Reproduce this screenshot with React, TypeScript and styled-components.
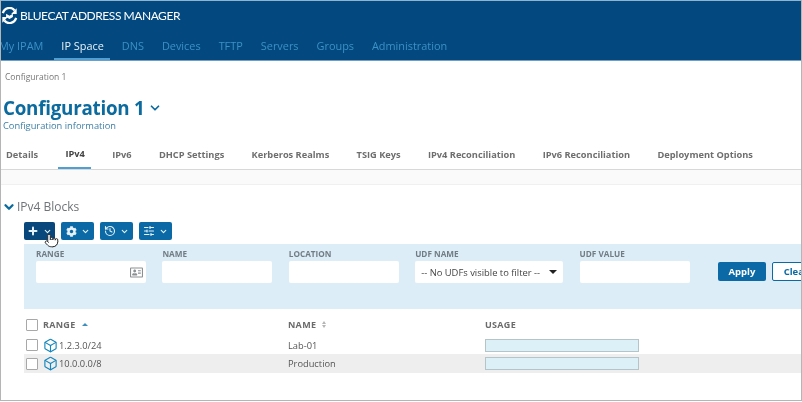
import React from "react"
import styled, { createGlobalStyle } from "styled-components"
import { Box, ChevronDown, History, Plus, Pointer, SlidersHorizontal } from "lucide-react"
import { FaCog, FaRegAddressCard } from "react-icons/fa"

const navItems = ["My IPAM", "IP Space", "DNS", "Devices", "TFTP", "Servers", "Groups", "Administration"]
const tabs = [
  "Details",
  "IPv4",
  "IPv6",
  "DHCP Settings",
  "Kerberos Realms",
  "TSIG Keys",
  "IPv4 Reconciliation",
  "IPv6 Reconciliation",
  "Deployment Options",
]
const rows = [
  { range: "1.2.3.0/24", name: "Lab-01" },
  { range: "10.0.0.0/8", name: "Production" },
]

function Logo() {
  return (
    <svg width="17" height="17" viewBox="0 0 18 18" fill="none">
      <path d="M2 6.5A7.2 7.2 0 0 1 14.5 3.6" stroke="#fff" strokeWidth="2.4" />
      <path d="M16 11.5A7.2 7.2 0 0 1 3.5 14.4" stroke="#fff" strokeWidth="2.4" />
      <path d="M16.6 1.2V7.4H10.8Z" fill="#fff" />
      <path d="M1.4 16.8V10.6H7.2Z" fill="#fff" />
      <path d="M5.4 7.2L9 9.2L12.6 7.2V10.6L9 12.6L5.4 10.6Z" fill="#fff" />
    </svg>
  )
}

function App() {
  return (
    <Page>
      <GlobalStyle />
      <Header>
        <Brand>
          <Logo />
          <BrandName>BLUECAT ADDRESS MANAGER</BrandName>
        </Brand>
        <Nav>
          {navItems.map((item) => (
            <NavItem key={item} $active={item === "IP Space"}>
              {item}
            </NavItem>
          ))}
        </Nav>
      </Header>

      <Breadcrumb>Configuration 1</Breadcrumb>
      <TitleRow>
        <Title>Configuration 1</Title>
        <ChevronDown size={14} strokeWidth={3} color="#0b6a9e" />
      </TitleRow>
      <Subtitle>Configuration information</Subtitle>

      <Tabs>
        {tabs.map((tab) => (
          <Tab key={tab} $active={tab === "IPv4"}>
            {tab}
          </Tab>
        ))}
      </Tabs>
      <TabShade />

      <Section>
        <SectionTitle>
          <SectionChevron>
            <ChevronDown size={14} strokeWidth={4} color="#0b6a9e" />
          </SectionChevron>
          IPv4 Blocks
        </SectionTitle>

        <Toolbar>
          <ToolButton $dark>
            <Plus size={12} strokeWidth={4} />
            <ChevronDown size={9} strokeWidth={3} />
            <Cursor>
              <Pointer size={15} strokeWidth={1.6} color="#2a2a2a" fill="#fff" />
            </Cursor>
          </ToolButton>
          <ToolButton>
            <FaCog size={11} />
            <ChevronDown size={9} strokeWidth={3} />
          </ToolButton>
          <ToolButton>
            <History size={12} strokeWidth={2.2} />
            <ChevronDown size={9} strokeWidth={3} />
          </ToolButton>
          <ToolButton>
            <SlidersHorizontal size={12} strokeWidth={2.2} />
            <ChevronDown size={9} strokeWidth={3} />
          </ToolButton>
        </Toolbar>

        <FilterPanel>
          <Field>
            <FieldLabel>RANGE</FieldLabel>
            <FieldInput>
              <FaRegAddressCard size={13} color="#8b8f92" />
            </FieldInput>
          </Field>
          <Field>
            <FieldLabel>NAME</FieldLabel>
            <FieldInput />
          </Field>
          <Field>
            <FieldLabel>LOCATION</FieldLabel>
            <FieldInput />
          </Field>
          <Field $wide>
            <FieldLabel>UDF NAME</FieldLabel>
            <FieldSelect>
              -- No UDFs visible to filter --
              <Caret />
            </FieldSelect>
          </Field>
          <Field>
            <FieldLabel>UDF VALUE</FieldLabel>
            <FieldInput />
          </Field>
          <Actions>
            <ApplyButton>Apply</ApplyButton>
            <ClearButton>Clear</ClearButton>
          </Actions>
        </FilterPanel>

        <Table>
          <HeadRow>
            <Checkbox />
            <RangeCell>
              RANGE <SortUp />
            </RangeCell>
            <NameCell>
              NAME <SortBoth />
            </NameCell>
            <div>USAGE</div>
          </HeadRow>
          {rows.map((row, index) => (
            <DataRow key={row.range} $shaded={index === 1}>
              <Checkbox />
              <RangeCell>
                <Box size={15} strokeWidth={1.8} color="#1486bc" />
                {row.range}
              </RangeCell>
              <NameCell>{row.name}</NameCell>
              <UsageBar />
            </DataRow>
          ))}
        </Table>
      </Section>
    </Page>
  )
}

export default App

const GlobalStyle = createGlobalStyle`
  html, body {
    margin: 0;
    padding: 0;
    background: #fff;
  }
`

const Page = styled.div`
  box-sizing: border-box;
  width: 802px;
  height: 401px;
  overflow: hidden;
  position: relative;
  background: #fff;
  border-left: 1px solid #b5b5b5;
  border-right: 1px solid #b5b5b5;
  border-bottom: 1px solid #b5b5b5;
  font-family: "Open Sans", sans-serif;
  color: #555;
  filter: blur(0.3px);
`

const Header = styled.header`
  background: #03497f;
  border-top: 1px solid #8fb4cf;
  border-bottom: 1px solid #6f9fc2;
`

const Brand = styled.div`
  height: 29px;
  display: flex;
  align-items: center;
  gap: 2px;
`

const BrandName = styled.div`
  color: #fff;
  font-family: "Lato", sans-serif;
  font-size: 12px;
  letter-spacing: -0.45px;
`

const Nav = styled.nav`
  height: 30px;
  display: flex;
  gap: 18px;
`

const NavItem = styled.div<{ $active?: boolean }>`
  font-size: 10.9px;
  line-height: 31px;
  height: 30px;
  color: ${(p) => (p.$active ? "#e8f2f8" : "#3b90c6")};
  position: relative;

  &:first-child {
    margin-left: -2px;
  }

  ${(p) =>
    p.$active &&
    `
    &::after {
      content: "";
      position: absolute;
      left: -7px;
      right: -6px;
      bottom: 0;
      height: 2px;
      background: #4f9fd4;
    }
  `}
`

const Breadcrumb = styled.div`
  font-size: 8.5px;
  line-height: 12px;
  color: #777;
  padding: 10px 0 0 4px;
`

const TitleRow = styled.div`
  display: flex;
  align-items: center;
  gap: 3px;
  padding: 14px 0 1px 2px;
`

const Title = styled.h1`
  margin: 0;
  font-size: 18.8px;
  letter-spacing: -0.25px;
  line-height: 22px;
  font-weight: 700;
  color: #0b6a9e;
`

const Subtitle = styled.div`
  font-size: 9.3px;
  line-height: 12px;
  color: #3d7fa6;
  padding-left: 2px;
`

const Tabs = styled.div`
  display: flex;
  gap: 27.3px;
  height: 33px;
  box-sizing: border-box;
  padding: 11px 0 0 5px;
  border-bottom: 1px solid #d8d8d8;
  margin-top: 5px;
`

const Tab = styled.div<{ $active?: boolean }>`
  font-size: 9.25px;
  font-weight: 700;
  line-height: 13px;
  color: ${(p) => (p.$active ? "#444" : "#6e6e6e")};
  position: relative;
  top: ${(p) => (p.$active ? "-1px" : "0")};

  ${(p) =>
    p.$active &&
    `
    &::after {
      content: "";
      position: absolute;
      left: -7px;
      right: -6px;
      top: 20px;
      height: 2px;
      background: #4f9fd4;
    }
  `}
`

const TabShade = styled.div`
  height: 14px;
  background: #fafafa;
  border-bottom: 1px solid #f0f0f0;
`

const Section = styled.section`
  padding: 14px 0 0 4px;
`

const SectionTitle = styled.div`
  display: flex;
  align-items: center;
  gap: 1px;
  font-size: 12px;
  line-height: 16px;
  color: #6f7478;
`

const SectionChevron = styled.span`
  display: flex;
  margin-left: -3px;
`

const Toolbar = styled.div`
  display: flex;
  gap: 6px;
  margin: 7px 0 0 19px;
`

const ToolButton = styled.div<{ $dark?: boolean }>`
  position: relative;
  display: flex;
  align-items: center;
  justify-content: center;
  gap: 4px;
  width: ${(p) => (p.$dark ? "31px" : "33px")};
  height: 18px;
  border-radius: 2px;
  color: #e6f1f8;
  background: ${(p) => (p.$dark ? "#07477b" : "#0b6aa6")};
`

const Cursor = styled.span`
  position: absolute;
  left: 20px;
  top: 11px;
  display: flex;
`

const FilterPanel = styled.div`
  display: flex;
  gap: 16.4px;
  height: 65px;
  box-sizing: border-box;
  margin: 4px -2px 0 19px;
  padding: 4px 0 0 12px;
  background: #dcedf8;
`

const Field = styled.div<{ $wide?: boolean }>`
  width: ${(p) => (p.$wide ? "148px" : "110px")};
  flex: none;
`

const FieldLabel = styled.div`
  font-size: 8.2px;
  font-weight: 700;
  line-height: 11px;
  color: #727c84;
`

const FieldInput = styled.div`
  height: 22px;
  margin-top: 2px;
  background: #fff;
  border-radius: 2px;
  display: flex;
  align-items: center;
  justify-content: flex-end;
  padding-right: 3px;
`

const FieldSelect = styled(FieldInput)`
  justify-content: space-between;
  padding: 0 6px;
  font-size: 9.4px;
  color: #444;
`

const Caret = styled.span`
  width: 0;
  height: 0;
  border-left: 4px solid transparent;
  border-right: 4px solid transparent;
  border-top: 4px solid #222;
`

const Actions = styled.div`
  display: flex;
  gap: 6px;
  margin: 14px 0 0 12px;
  flex: none;
`

const ApplyButton = styled.div`
  width: 48px;
  height: 19px;
  line-height: 19px;
  text-align: center;
  border-radius: 2px;
  background: #0b6aa6;
  color: #fff;
  font-size: 9.5px;
  font-weight: 700;
`

const ClearButton = styled(ApplyButton)`
  box-sizing: border-box;
  line-height: 17px;
  border: 1px solid #0b6aa6;
  background: #fff;
  color: #0b6aa6;
`

const Table = styled.div`
  margin: 4px 0 0 19px;
`

const HeadRow = styled.div`
  display: grid;
  grid-template-columns: 19px 243px 197px 1fr;
  align-items: center;
  height: 23px;
  padding-left: 2px;
  font-size: 9px;
  font-weight: 700;
  color: #6b6b6b;
  letter-spacing: 0.3px;
`

const DataRow = styled.div<{ $shaded?: boolean }>`
  display: grid;
  grid-template-columns: 19px 243px 197px 1fr;
  align-items: center;
  height: ${(p) => (p.$shaded ? "19px" : "18px")};
  padding-left: 2px;
  font-size: 9.3px;
  color: #555;
  background: ${(p) => (p.$shaded ? "#eeeeee" : "transparent")};
`

const Checkbox = styled.div`
  box-sizing: border-box;
  width: 12px;
  height: 12px;
  background: #fff;
  border: 1px solid #a8a8a8;
  border-radius: 1px;
`

const RangeCell = styled.div`
  display: flex;
  align-items: center;
  gap: 1px;
  margin-left: -2px;
`

const NameCell = styled.div`
  display: flex;
  align-items: center;
  gap: 6px;
`

const SortUp = styled.span`
  width: 0;
  height: 0;
  margin-left: 5px;
  border-left: 3px solid transparent;
  border-right: 3px solid transparent;
  border-bottom: 3px solid #3a8fc0;
`

const SortBoth = styled.span`
  width: 0;
  height: 0;
  border-left: 2.5px solid transparent;
  border-right: 2.5px solid transparent;
  border-bottom: 3px solid #b5b5b5;
  position: relative;
  top: -2px;

  &::after {
    content: "";
    position: absolute;
    left: -2.5px;
    top: 4px;
    border-left: 2.5px solid transparent;
    border-right: 2.5px solid transparent;
    border-top: 3px solid #b5b5b5;
  }
`

const UsageBar = styled.div`
  box-sizing: border-box;
  width: 154px;
  height: 13px;
  background: #dcf0f8;
  border: 1px solid #b4c4c9;
`
